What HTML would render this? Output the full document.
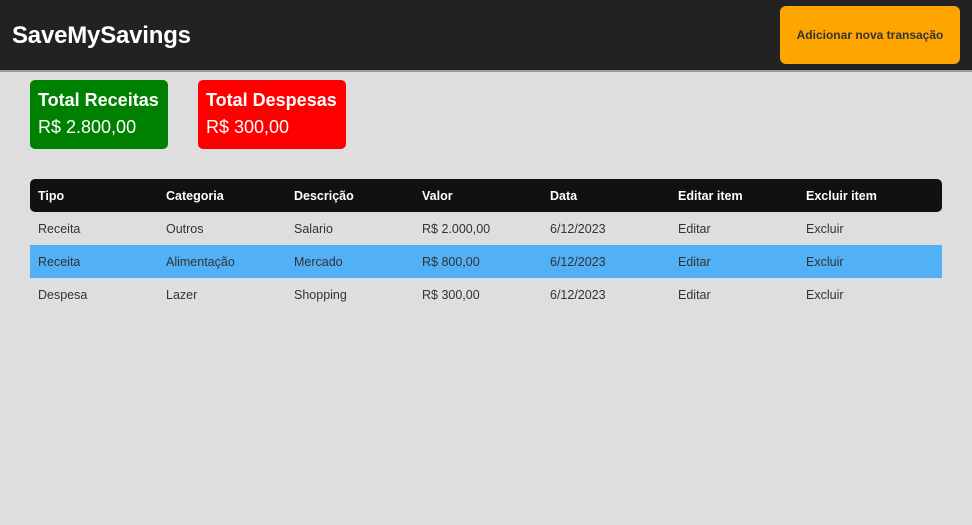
<!DOCTYPE html>
<html><head><style>
body{margin:0;width:972px;height:525px;background:#dedede;font-family:"Liberation Sans",sans-serif;overflow:hidden;position:relative}
.hdr{position:absolute;left:0;top:0;width:972px;height:70px;background:#222;border-bottom:2px solid #999}
.logo{position:absolute;left:12px;top:22px;color:#fff;font-weight:bold;font-size:24px;letter-spacing:-0.2px}
.btn{position:absolute;left:780px;top:6px;width:180px;height:58px;background:#ffa500;border-radius:6px;color:#333;font-weight:bold;font-size:12px;line-height:58px;text-align:center}
.card{position:absolute;top:80px;height:69px;border-radius:5px;color:#fff;box-sizing:border-box;padding:10px 8px}
.card b{display:block;font-size:18px}
.card span{display:block;font-size:18px;margin-top:6px}
.row{position:absolute;left:30px;width:912px;height:33px;font-size:12.5px;color:#333}
.row div{position:absolute;top:10px}
.th{background:#111;color:#fff;font-weight:bold;border-radius:5px}
</style></head><body>
<div class="hdr"><div class="logo">SaveMySavings</div><div class="btn">Adicionar nova transação</div></div>
<div class="card" style="left:30px;width:138px;background:#008000"><b>Total Receitas</b><span>R$ 2.800,00</span></div>
<div class="card" style="left:198px;width:148px;background:#ff0000"><b>Total Despesas</b><span>R$ 300,00</span></div>
<div class="row th" style="top:179px"><div style="left:8px">Tipo</div><div style="left:136px">Categoria</div><div style="left:264px">Descrição</div><div style="left:392px">Valor</div><div style="left:520px">Data</div><div style="left:648px">Editar item</div><div style="left:776px">Excluir item</div></div>
<div class="row" style="top:212px"><div style="left:8px">Receita</div><div style="left:136px">Outros</div><div style="left:264px">Salario</div><div style="left:392px">R$ 2.000,00</div><div style="left:520px">6/12/2023</div><div style="left:648px">Editar</div><div style="left:776px">Excluir</div></div>
<div class="row" style="top:245px;background:#52b0f7"><div style="left:8px">Receita</div><div style="left:136px">Alimentação</div><div style="left:264px">Mercado</div><div style="left:392px">R$ 800,00</div><div style="left:520px">6/12/2023</div><div style="left:648px">Editar</div><div style="left:776px">Excluir</div></div>
<div class="row" style="top:278px"><div style="left:8px">Despesa</div><div style="left:136px">Lazer</div><div style="left:264px">Shopping</div><div style="left:392px">R$ 300,00</div><div style="left:520px">6/12/2023</div><div style="left:648px">Editar</div><div style="left:776px">Excluir</div></div>
</body></html>
